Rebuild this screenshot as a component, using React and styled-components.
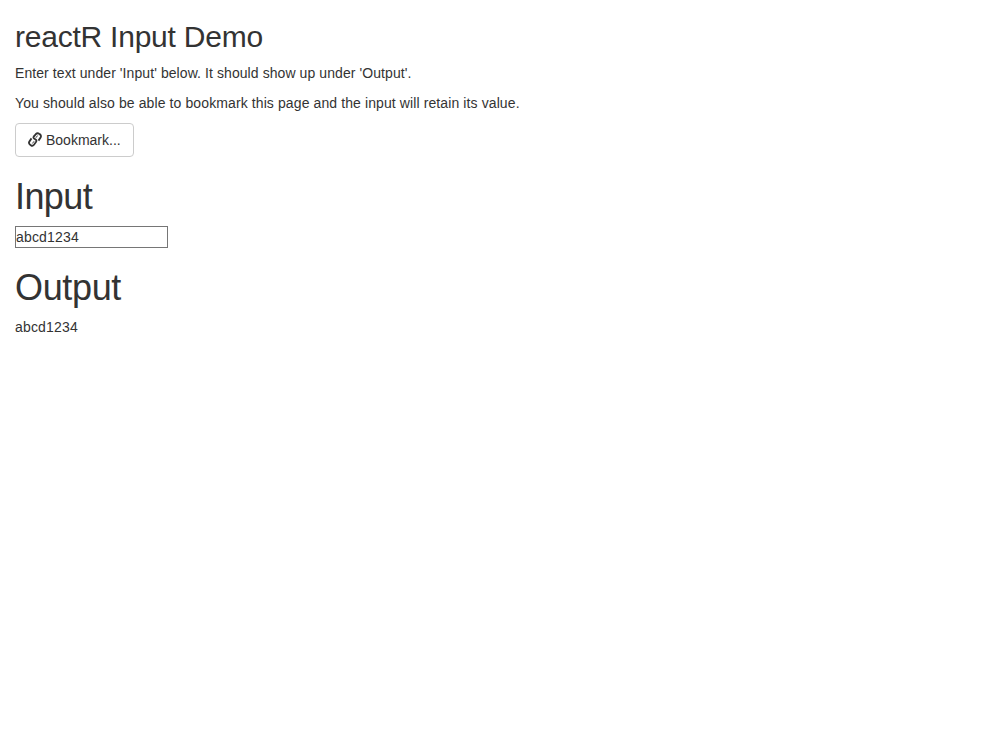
import React, { useState } from "react";
import styled, { createGlobalStyle } from "styled-components";

const GlobalStyle = createGlobalStyle`
  *, *::before, *::after { box-sizing: border-box; }
  body {
    margin: 0;
    background: #fff;
    color: #333;
    font: 14px/20px "Liberation Sans", Arial, sans-serif;
  }
`;

const Container = styled.main`
  padding: 0 15px;
`;

const Title = styled.h2`
  margin: 20px 0 10px;
  font-size: 30px;
  font-weight: 400;
  line-height: 33px;
  letter-spacing: -0.23px;
`;

const SectionTitle = styled.h1`
  margin: 20px 0 10px;
  font-size: 36px;
  font-weight: 400;
  line-height: 39px;
  letter-spacing: ${({ $tracking }) => $tracking};
`;

const Paragraph = styled.p`
  margin: 0 0 10px;
  letter-spacing: ${({ $tracking }) => $tracking};
`;

const BookmarkButton = styled.button`
  display: flex;
  align-items: center;
  gap: 4px;
  height: 34px;
  padding: 6px 12px;
  border: 1px solid #ccc;
  border-radius: 4px;
  background: #fff;
  color: #333;
  font: inherit;
  white-space: nowrap;
`;

const LinkIcon = styled.svg`
  width: 14px;
  height: 15px;
  flex: none;
  margin-top: -1px;
`;

const TextInput = styled.input`
  display: block;
  width: 153px;
  height: 22px;
  padding: 0;
  border: 1px solid #767676;
  border-radius: 0;
  background: #fff;
  color: #333;
  font: inherit;
  letter-spacing: 0.18px;
  outline: none;
`;

const Output = styled.div`
  letter-spacing: 0.18px;
`;

export default function App() {
  const [value, setValue] = useState("abcd1234");
  return (
    <Container>
      <GlobalStyle />
      <Title>reactR Input Demo</Title>
      <Paragraph $tracking="0.08px">Enter text under 'Input' below. It should show up under 'Output'.</Paragraph>
      <Paragraph $tracking="0.105px">You should also be able to bookmark this page and the input will retain its value.</Paragraph>
      <BookmarkButton type="button">
        <LinkIcon viewBox="0 0 14 14" preserveAspectRatio="none" fill="none" stroke="currentColor" strokeWidth="1.8" strokeLinejoin="round">
          <path d="M7.9 5.4 9.6 3.3M6.1 8.6 4.4 10.7" strokeWidth="0.9" />
          <path d="M3.5 6 1.5 8.7C.7 9.8.9 10.9 1.9 11.7L2.8 12.3C3.9 13.1 5.2 12.9 6 11.9L8 9.3C8.7 8.4 8.6 7.8 7.9 7.3L6.1 6.1C5.3 5.5 5.2 5 5.8 4.2L7.9 1.9C8.8 1 10.1.9 11.1 1.6L12 2.2C13.1 3 13.3 4.2 12.5 5.3L10.5 8" />
        </LinkIcon>
        <span>Bookmark...</span>
      </BookmarkButton>
      <SectionTitle $tracking="-0.6px">Input</SectionTitle>
      <TextInput value={value} onChange={(e) => setValue(e.target.value)} />
      <SectionTitle $tracking="-0.35px">Output</SectionTitle>
      <Output>{value}</Output>
    </Container>
  );
}
